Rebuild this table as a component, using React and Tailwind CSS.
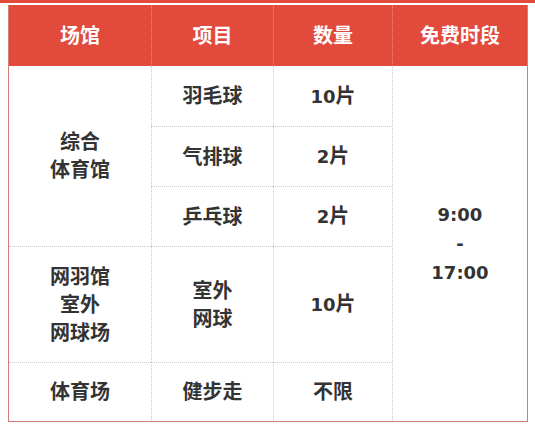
import React from "react";

const font = { fontFamily: '"DejaVu Sans", "Noto Sans CJK SC", sans-serif' };

function Cell({ className = "", children }) {
  return (
    <div className={`flex items-center justify-center text-center font-bold text-[20px] leading-[28px] text-[#333333] ${className}`}>
      <div>{children}</div>
    </div>
  );
}

function N({ children }) {
  return <span className="text-[18px]">{children}</span>;
}

export default function App() {
  return (
    <div className="w-[535px] h-[428px] bg-white" style={font}>
      <div className="h-[3px] bg-[#e24a3b]" />
      <div className="h-[2px]" />
      <div className="ml-[8px] w-[520px] grid grid-cols-[142px_122px_119px_135px] grid-rows-[61px_60px_60px_60px_116px_59px] border-x border-b border-[#cf7f76]">
        <div className="col-start-1 row-start-1 flex items-center justify-center bg-[#e24a3b] text-white font-bold text-[20px]">场馆</div>
        <div className="col-start-2 row-start-1 flex items-center justify-center bg-[#e24a3b] text-white font-bold text-[20px] border-l border-dotted border-[#ef8c80]">项目</div>
        <div className="col-start-3 row-start-1 flex items-center justify-center bg-[#e24a3b] text-white font-bold text-[20px] border-l border-dotted border-[#ef8c80]">数量</div>
        <div className="col-start-4 row-start-1 flex items-center justify-center bg-[#e24a3b] text-white font-bold text-[20px] border-l border-dotted border-[#ef8c80]">免费时段</div>

        <Cell className="col-start-1 row-start-2 row-span-3">综合<br />体育馆</Cell>
        <Cell className="col-start-2 row-start-2 border-l border-dotted border-[#cccccc]">羽毛球</Cell>
        <Cell className="col-start-3 row-start-2 border-l border-dotted border-[#cccccc]"><N>10</N>片</Cell>
        <Cell className="col-start-2 row-start-3 border-l border-t border-dotted border-[#cccccc]">气排球</Cell>
        <Cell className="col-start-3 row-start-3 border-l border-t border-dotted border-[#cccccc]"><N>2</N>片</Cell>
        <Cell className="col-start-2 row-start-4 border-l border-t border-dotted border-[#cccccc]">乒乓球</Cell>
        <Cell className="col-start-3 row-start-4 border-l border-t border-dotted border-[#cccccc]"><N>2</N>片</Cell>

        <Cell className="col-start-1 row-start-5 border-t border-dotted border-[#cccccc]">网羽馆<br />室外<br />网球场</Cell>
        <Cell className="col-start-2 row-start-5 border-l border-t border-dotted border-[#cccccc]">室外<br />网球</Cell>
        <Cell className="col-start-3 row-start-5 border-l border-t border-dotted border-[#cccccc]"><N>10</N>片</Cell>

        <Cell className="col-start-1 row-start-6 border-t border-dotted border-[#cccccc]">体育场</Cell>
        <Cell className="col-start-2 row-start-6 border-l border-t border-dotted border-[#cccccc]">健步走</Cell>
        <Cell className="col-start-3 row-start-6 border-l border-t border-dotted border-[#cccccc]">不限</Cell>

        <Cell className="col-start-4 row-start-2 row-span-5 border-l border-dotted border-[#cccccc]"><N>9:00<br />-<br />17:00</N></Cell>
      </div>
    </div>
  );
}
